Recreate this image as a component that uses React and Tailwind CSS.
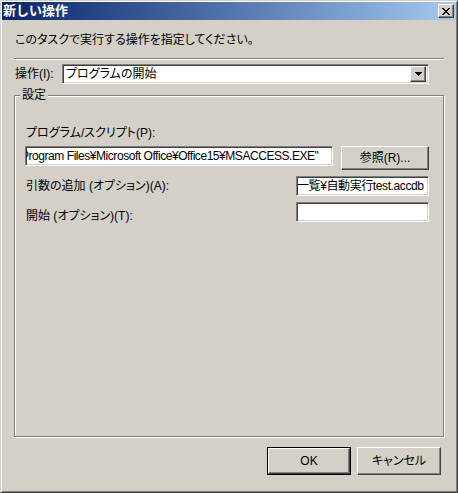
const raised =
  "border border-t-white border-l-white border-r-[#404040] border-b-[#404040] shadow-[inset_-1px_-1px_0_#808080]";
const sunken =
  "border border-t-[#808080] border-l-[#808080] border-r-white border-b-white shadow-[inset_1px_1px_0_#404040,inset_-1px_-1px_0_#d4d0c8]";

function Field({ className = "", children }) {
  return (
    <div className={`${sunken} bg-white h-[20px] flex items-center overflow-hidden whitespace-nowrap ${className}`}>
      {children}
    </div>
  );
}

export default function App() {
  return (
    <div className="w-[458px] h-[493px] bg-[#d4d0c8] border border-t-[#d4d0c8] border-l-[#d4d0c8] border-r-[#404040] border-b-[#404040] shadow-[inset_1px_1px_0_#fff,inset_-1px_-1px_0_#808080] p-px flex flex-col text-[12px] leading-4 text-black font-['Liberation_Sans','Noto_Sans_CJK_JP',sans-serif] [font-feature-settings:'palt'] select-none">
      {/* title bar */}
      <div className="h-[18px] bg-linear-to-r from-[#0a246a] to-[#a6caf0] flex items-center justify-between pl-px pr-[2px]">
        <span className="text-white font-bold text-[13px] [font-feature-settings:normal]">新しい操作</span>
        <div className={`${raised} bg-[#d4d0c8] w-[16px] h-[14px] flex items-center justify-center`}>
          <svg width="8" height="7" viewBox="0 0 8 7" shapeRendering="crispEdges">
            <path d="M0 0h2v1h-2zM6 0h2v1h-2zM1 1h2v1h-2zM5 1h2v1h-2zM2 2h4v1h-4zM3 3h2v1h-2zM2 4h4v1h-4zM1 5h2v1h-2zM5 5h2v1h-2zM0 6h2v1h-2zM6 6h2v1h-2z" fill="#000" />
          </svg>
        </div>
      </div>

      <div className="flex-1 flex flex-col px-[12px]">
        <p className="mt-[12px] pl-px">このタスクで実行する操作を指定してください。</p>

        <div className="mt-[10px] h-[2px] border-t border-t-[#808080] border-b border-b-white" />

        <div className="mt-[4px] flex items-center h-[20px]">
          <span className="w-[48px] pl-px">操作(I):</span>
          <Field className="w-[367px] pl-[3px] justify-between pr-[2px]">
            <span>プログラムの開始</span>
            <div className={`${raised} bg-[#d4d0c8] w-[16px] h-[16px] flex items-center justify-center`}>
              <svg width="7" height="4" viewBox="0 0 7 4" shapeRendering="crispEdges">
                <path d="M0 0h7v1h-7zM1 1h5v1h-5zM2 2h3v1h-3zM3 3h1v1h-1z" fill="#000" />
              </svg>
            </div>
          </Field>
        </div>

        <fieldset className="mt-[3px] flex-1 border border-[#808080] shadow-[1px_1px_0_#fff,inset_1px_1px_0_#fff] min-h-0">
          <legend className="ml-[5px] px-[2px] bg-[#d4d0c8] leading-4">設定</legend>
          <div className="pl-[10px] pr-[14px] pt-[22px]">
            <p className="pl-px">プログラム/スクリプト(P):</p>
            <div className="mt-[5px] flex items-start">
              <Field className="w-[308px]">
                <span className="-ml-[5px] tracking-[-0.45px]">Program Files¥Microsoft Office¥Office15¥MSACCESS.EXE"</span>
              </Field>
              <button className={`${raised} ml-auto w-[88px] h-[24px] bg-[#d4d0c8] flex items-center justify-center`}>
                参照(R)...
              </button>
            </div>

            <div className="mt-[6px] flex items-center">
              <span className="pl-px">引数の追加 (オプション)(A):</span>
              <Field className="ml-auto w-[133px]">
                <span className="tracking-[-0.4px]">一覧¥自動実行test.accdb</span>
              </Field>
            </div>

            <div className="mt-[6px] flex items-start">
              <span className="pl-px mt-[6px]">開始 (オプション)(T):</span>
              <Field className="ml-auto w-[133px] h-[19px]" />
            </div>
          </div>
        </fieldset>

        <div className="mt-[10px] mb-[16px] flex justify-end gap-[6px] pr-[3px]">
          <div className="border border-black">
            <button className={`${raised} w-[82px] h-[26px] bg-[#d4d0c8] flex items-center justify-center`}>OK</button>
          </div>
          <button className={`${raised} w-[84px] h-[28px] bg-[#d4d0c8] flex items-center justify-center`}>キャンセル</button>
        </div>
      </div>
    </div>
  );
}
